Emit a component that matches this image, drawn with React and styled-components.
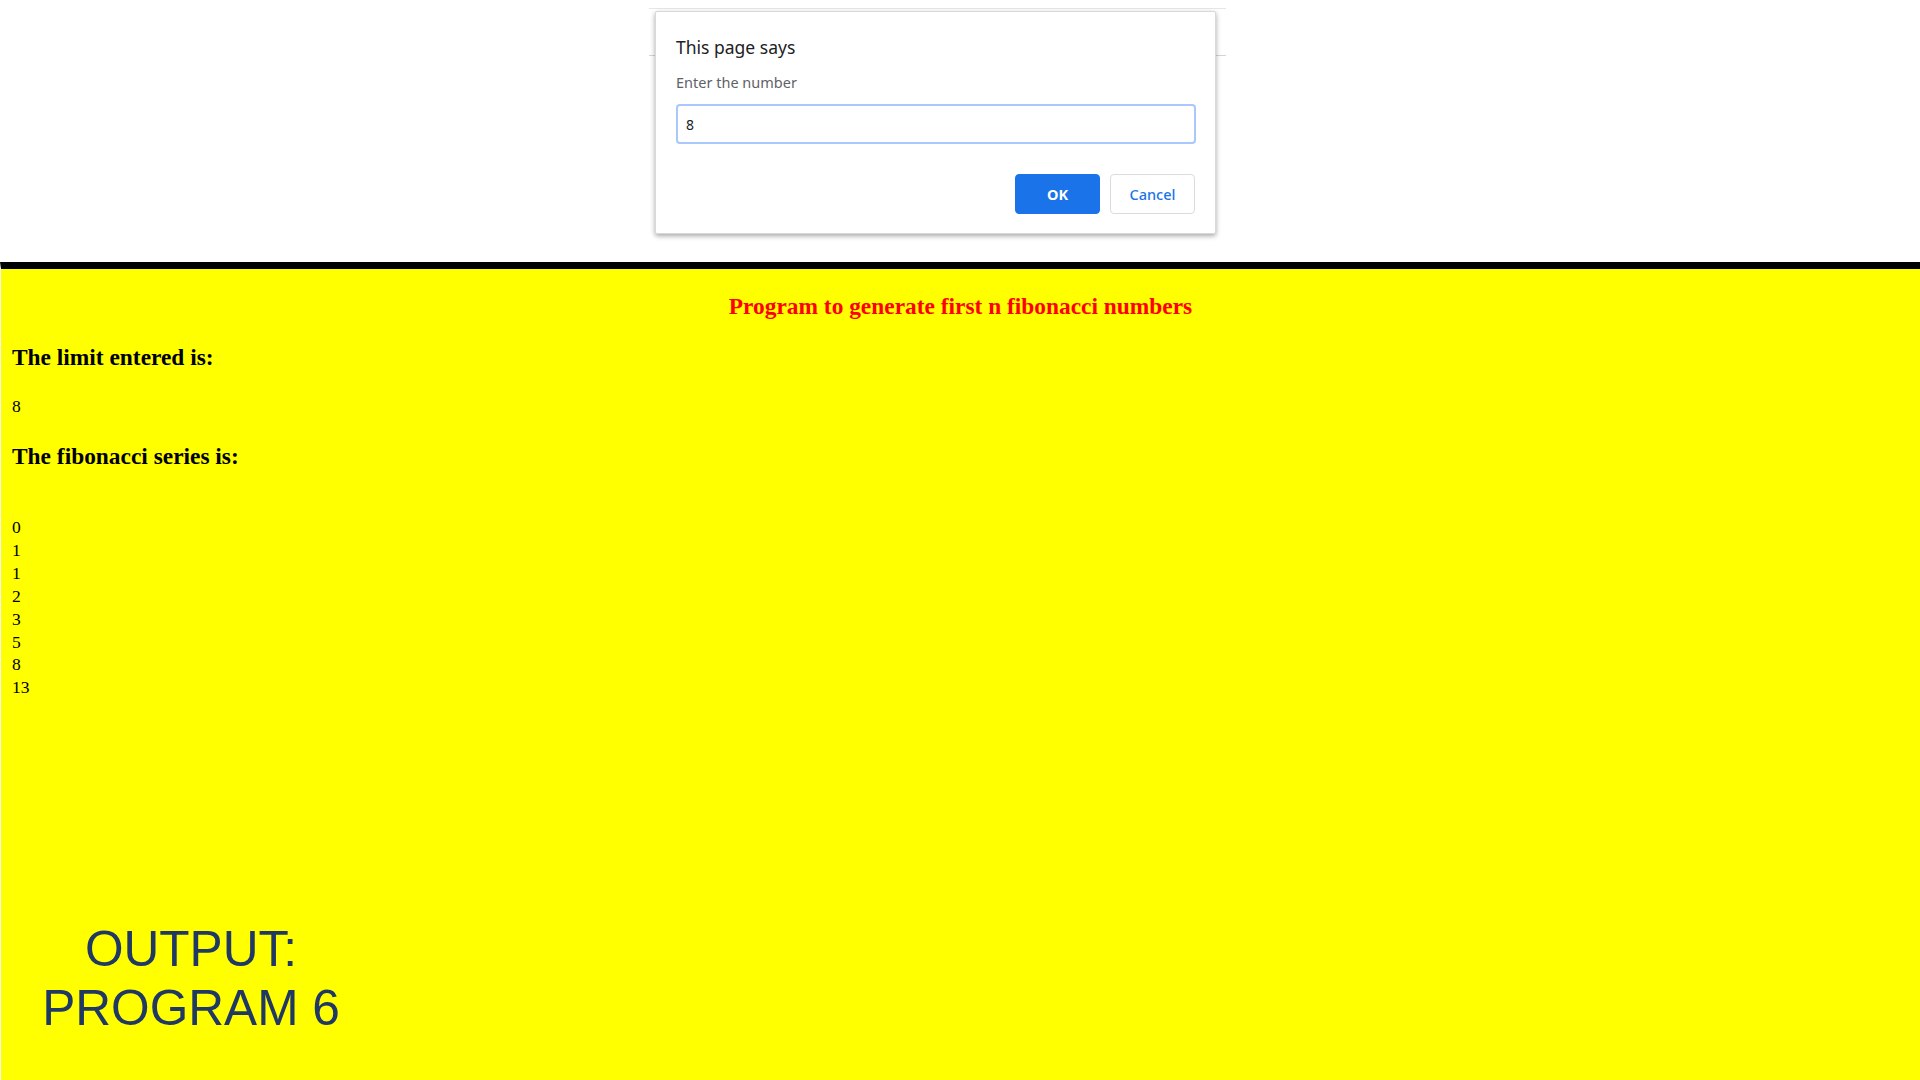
import React from "react";
import styled, { createGlobalStyle } from "styled-components";

const fib = [0, 1, 1, 2, 3, 5, 8, 13];

function App() {
  return (
    <Page>
      <GlobalStyle />
      <TopStrip>
        <BrowserBar />
        <PromptBox>
          <PromptTitle>This page says</PromptTitle>
          <PromptLabel>Enter the number</PromptLabel>
          <PromptInput defaultValue="8" />
          <PromptActions>
            <PromptButton primary>OK</PromptButton>
            <PromptButton>Cancel</PromptButton>
          </PromptActions>
        </PromptBox>
      </TopStrip>
      <Main>
        <Title>Program to generate first n fibonacci numbers</Title>
        <SubHead>The limit entered is:</SubHead>
        <Value>8</Value>
        <SubHead>The fibonacci series is:</SubHead>
        <Series>
          {fib.map((n, i) => (
            <li key={i}>{n}</li>
          ))}
        </Series>
        <Caption>
          OUTPUT:
          <br />
          PROGRAM 6
        </Caption>
      </Main>
    </Page>
  );
}

export default App;

const GlobalStyle = createGlobalStyle`
  html, body {
    margin: 0;
    padding: 0;
    background: #fff;
  }
  * {
    box-sizing: border-box;
  }
`;

const Page = styled.div`
  display: flex;
  flex-direction: column;
  min-height: 100vh;
  width: 1920px;
  overflow: hidden;
`;

const TopStrip = styled.div`
  position: relative;
  height: 262px;
  background: #fff;
  padding: 8px 0 0 649px;
`;

// faint leftover of the browser bar behind the prompt
const BrowserBar = styled.div`
  width: 577px;
  height: 48px;
  border-top: 1px solid #e6e6e6;
  border-bottom: 1px solid #d4d4d4;
`;

const PromptBox = styled.div`
  position: absolute;
  top: 11px;
  left: 655px;
  width: 561px;
  height: 223px;
  background: #fff;
  border: 1px solid #d9d9d9;
  border-radius: 2px;
  box-shadow: 0 2px 5px rgba(0, 0, 0, 0.35);
  padding: 23px 20px 0 20px;
  font-family: "Noto Sans", "Open Sans", sans-serif;
  display: flex;
  flex-direction: column;
`;

const PromptTitle = styled.div`
  font-size: 17.5px;
  color: #202124;
  line-height: 24px;
`;

const PromptLabel = styled.div`
  margin-top: 13px;
  font-size: 14.5px;
  color: #5f6368;
  line-height: 20px;
`;

const PromptInput = styled.input`
  margin-top: 12px;
  width: 520px;
  height: 40px;
  border: 2px solid #a8c7fa;
  border-radius: 4px;
  padding: 0 8px;
  font-family: inherit;
  font-size: 14px;
  color: #202124;
  outline: none;
`;

const PromptActions = styled.div`
  display: flex;
  justify-content: flex-end;
  gap: 10px;
  margin-top: 30px;
`;

const PromptButton = styled.button`
  width: 85px;
  height: 40px;
  border-radius: 4px;
  font-family: inherit;
  font-size: 14.5px;
  font-weight: ${(p) => (p.primary ? 700 : 500)};
  color: ${(p) => (p.primary ? "#fff" : "#1a73e8")};
  background: ${(p) => (p.primary ? "#1a73e8" : "#fff")};
  border: 1px solid ${(p) => (p.primary ? "#1a73e8" : "#dadce0")};
`;

const Main = styled.div`
  flex: 1;
  display: flex;
  flex-direction: column;
  background: #ffff00;
  border-top: 7px solid #000;
  border-left: 1px solid #fff;
  padding: 24px 0 43px 11px;
  font-family: "Liberation Serif", "Times New Roman", serif;
  color: #000;
`;

const Title = styled.h2`
  margin: 0;
  text-align: center;
  color: #ff0000;
  font-size: 23.4px;
  line-height: 26px;
  font-weight: 700;
  padding-right: 11px;
`;

const SubHead = styled.h3`
  margin: 26px 0 0;
  font-size: 23.4px;
  line-height: 25px;
  font-weight: 700;
`;

const Value = styled.p`
  margin: 25px 0 0;
  font-size: 17.5px;
  line-height: 23px;
`;

const Series = styled.ul`
  list-style: none;
  margin: 47px 0 0;
  padding: 0;
  font-size: 17.5px;
  line-height: 22.9px;
`;

const Caption = styled.div`
  margin-top: auto;
  margin-left: 14px;
  width: 330px;
  text-align: center;
  font-family: "Liberation Sans", Arial, sans-serif;
  font-size: 49.6px;
  line-height: 58.5px;
  color: #1f3864;
`;
